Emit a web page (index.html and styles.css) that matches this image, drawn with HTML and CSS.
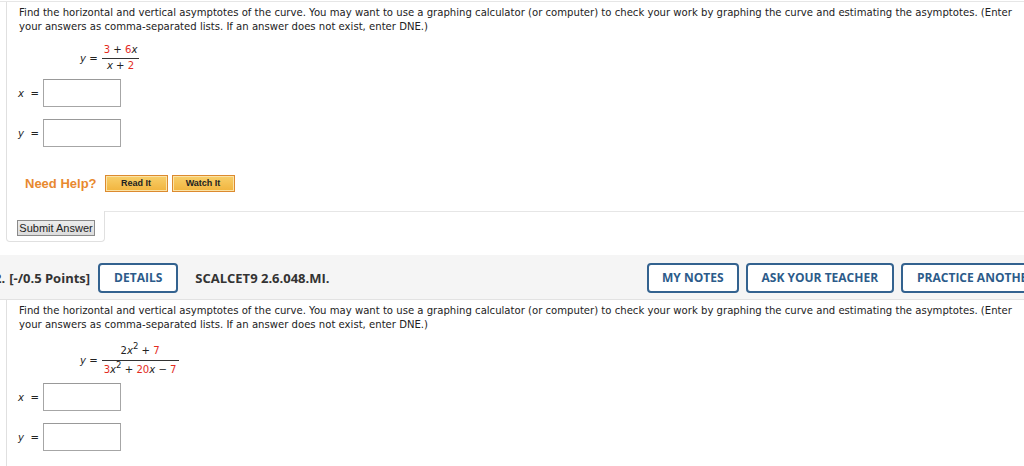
FILE: index.html
```html
<!DOCTYPE html>
<html>
<head>
<meta charset="utf-8">
<link rel="stylesheet" href="styles.css">
</head>
<body>
<div class="topline"></div>
<section class="panel panel-first">
  <p class="prompt">Find the horizontal and vertical asymptotes of the curve. You may want to use a graphing calculator (or computer) to check your work by graphing the curve and estimating the asymptotes. (Enter your answers as comma-separated lists. If an answer does not exist, enter DNE.)</p>
  <div class="formula">
    <span class="lhs"><i>y</i> =</span>
    <span class="frac">
      <span class="num"><span class="red">3</span> + <span class="red">6</span><i>x</i></span>
      <span class="den"><i>x</i> + <span class="red">2</span></span>
    </span>
  </div>
  <div class="answers">
    <div class="row"><span class="lbl"><i>x</i> &nbsp;=</span><span class="box"></span></div>
    <div class="row"><span class="lbl"><i>y</i> &nbsp;=</span><span class="box"></span></div>
  </div>
  <div class="help">
    <span class="need">Need Help?</span>
    <span class="hbtn">Read It</span>
    <span class="hbtn">Watch It</span>
  </div>
</section>
<div class="submit-row">
  <div class="submit-tab"><span class="submit">Submit Answer</span></div>
  <div class="submit-rest"></div>
</div>

<div class="qhead">
  <div class="qleft">
    <span class="qnum">2.</span>
    <span class="pts">[-/0.5 Points]</span>
    <span class="obtn">DETAILS</span>
    <span class="code">SCALCET9 2.6.048.MI.</span>
  </div>
  <div class="qright">
    <span class="obtn">MY NOTES</span>
    <span class="obtn">ASK YOUR TEACHER</span>
    <span class="obtn">PRACTICE ANOTHER</span>
  </div>
</div>

<section class="panel panel-second">
  <p class="prompt">Find the horizontal and vertical asymptotes of the curve. You may want to use a graphing calculator (or computer) to check your work by graphing the curve and estimating the asymptotes. (Enter your answers as comma-separated lists. If an answer does not exist, enter DNE.)</p>
  <div class="formula formula-two">
    <span class="lhs"><i>y</i> =</span>
    <span class="frac">
      <span class="num">2<i>x</i><sup>2</sup> + <span class="red">7</span></span>
      <span class="den"><span class="red">3</span><i>x</i><sup>2</sup> + <span class="red">20</span><i>x</i> − <span class="red">7</span></span>
    </span>
  </div>
  <div class="answers answers-two">
    <div class="row"><span class="lbl"><i>x</i> &nbsp;=</span><span class="box"></span></div>
    <div class="row"><span class="lbl"><i>y</i> &nbsp;=</span><span class="box"></span></div>
  </div>
</section>
</body>
</html>
```

FILE: styles.css
```css
html, body {
  margin: 0;
  padding: 0;
  background: #fff;
}
body {
  width: 1024px;
  height: 466px;
  overflow: hidden;
  font-family: "DejaVu Sans", Verdana, sans-serif;
  font-size: 10.1px;
  color: #222;
}
.topline {
  height: 1px;
  margin-top: 1px;
  background: #e6e6e6;
}
.panel {
  margin-left: 6px;
  border-left: 1px solid #e0e0e0;
  padding: 4px 2px 0 12px;
}
.panel-first {
  padding-bottom: 19px;
}
.prompt {
  margin: 0;
  line-height: 14px;
}
.formula {
  display: flex;
  align-items: center;
  margin-top: 9px;
  padding-left: 61px;
}
.lhs {
  margin-right: 4px;
  white-space: pre;
}
.frac {
  display: inline-flex;
  flex-direction: column;
  align-items: center;
}
.num {
  line-height: 14px;
  padding: 0 2px 1px;
  border-bottom: 1px solid #333;
  align-self: stretch;
  text-align: center;
}
.den {
  line-height: 14px;
  padding: 0 2px;
}
.red { color: #e32b1e; }
sup {
  font-size: 8.5px;
  line-height: 0;
  vertical-align: 5px;
}
.formula-two {
  margin-top: 12px;
}
.formula-two .num { padding-bottom: 2px; }
.formula-two .den { padding-top: 2px; }
.answers {
  display: flex;
  flex-direction: column;
  gap: 12px;
  margin-top: 6px;
}
.answers-two {
  margin-top: 6px;
}
.row {
  display: flex;
  align-items: center;
}
.lbl {
  width: 25px;
  margin-left: -1px;
}
.box {
  width: 76px;
  height: 26px;
  border: 1px solid #a6a6a6;
  border-top-color: #999;
  background: #fff;
}
.help {
  display: flex;
  align-items: center;
  margin-top: 28px;
  margin-left: 6px;
}
.need {
  font-family: "Liberation Sans", Arial, sans-serif;
  font-weight: bold;
  font-size: 13px;
  color: #e8892f;
  margin-right: 8px;
}
.hbtn {
  width: 59px;
  height: 13px;
  margin-right: 4px;
  border: 1px solid #dc8a2f;
  box-shadow: inset 0 0 0 1px #fbe3a6;
  background: linear-gradient(#f8cf6a, #f1b43e);
  font-family: "Liberation Sans", Arial, sans-serif;
  font-weight: bold;
  font-size: 9px;
  line-height: 13px;
  text-align: center;
  color: #222;
  padding: 1px;
}
.submit-row {
  display: flex;
  height: 31px;
}
.submit-tab {
  margin-left: 6px;
  width: 87px;
  padding: 9px 0 0 10px;
  border: 1px solid #e0e0e0;
  border-top: none;
  border-radius: 0 0 4px 4px;
}
.submit-rest {
  flex: 1;
  border-top: 1px solid #e6e6e6;
}
.submit {
  display: inline-block;
  width: 76px;
  height: 14px;
  border: 1px solid #8a8a8a;
  background: linear-gradient(#ececec, #dcdcdc);
  font-family: "Liberation Sans", Arial, sans-serif;
  font-size: 11px;
  line-height: 14px;
  text-align: center;
  color: #222;
}
.qhead {
  margin-top: 13px;
  height: 42px;
  padding-top: 2px;
  background: #f5f5f5;
  border-bottom: 1px solid #e2e2e2;
  display: flex;
  align-items: center;
  font-family: "Open Sans", sans-serif;
  font-weight: 700;
  font-size: 13px;
  color: #333;
}
.qleft, .qright {
  display: flex;
  align-items: center;
  flex: none;
}
.qleft {
  width: 647px;
}
.qnum {
  margin-left: -6px;
  margin-right: 4px;
}
.pts {
  margin-right: 8px;
}
.code {
  margin-left: 17px;
}
.obtn {
  height: 26px;
  line-height: 26px;
  padding: 0 14px;
  border: 2px solid #33628f;
  border-radius: 4px;
  color: #2c5b8a;
  background: #fff;
  font-size: 12px;
}
.qright .obtn:first-child {
  padding: 0 13px;
}
.qright {
  gap: 7px;
}
.panel-second {
  padding-bottom: 20px;
}
```
